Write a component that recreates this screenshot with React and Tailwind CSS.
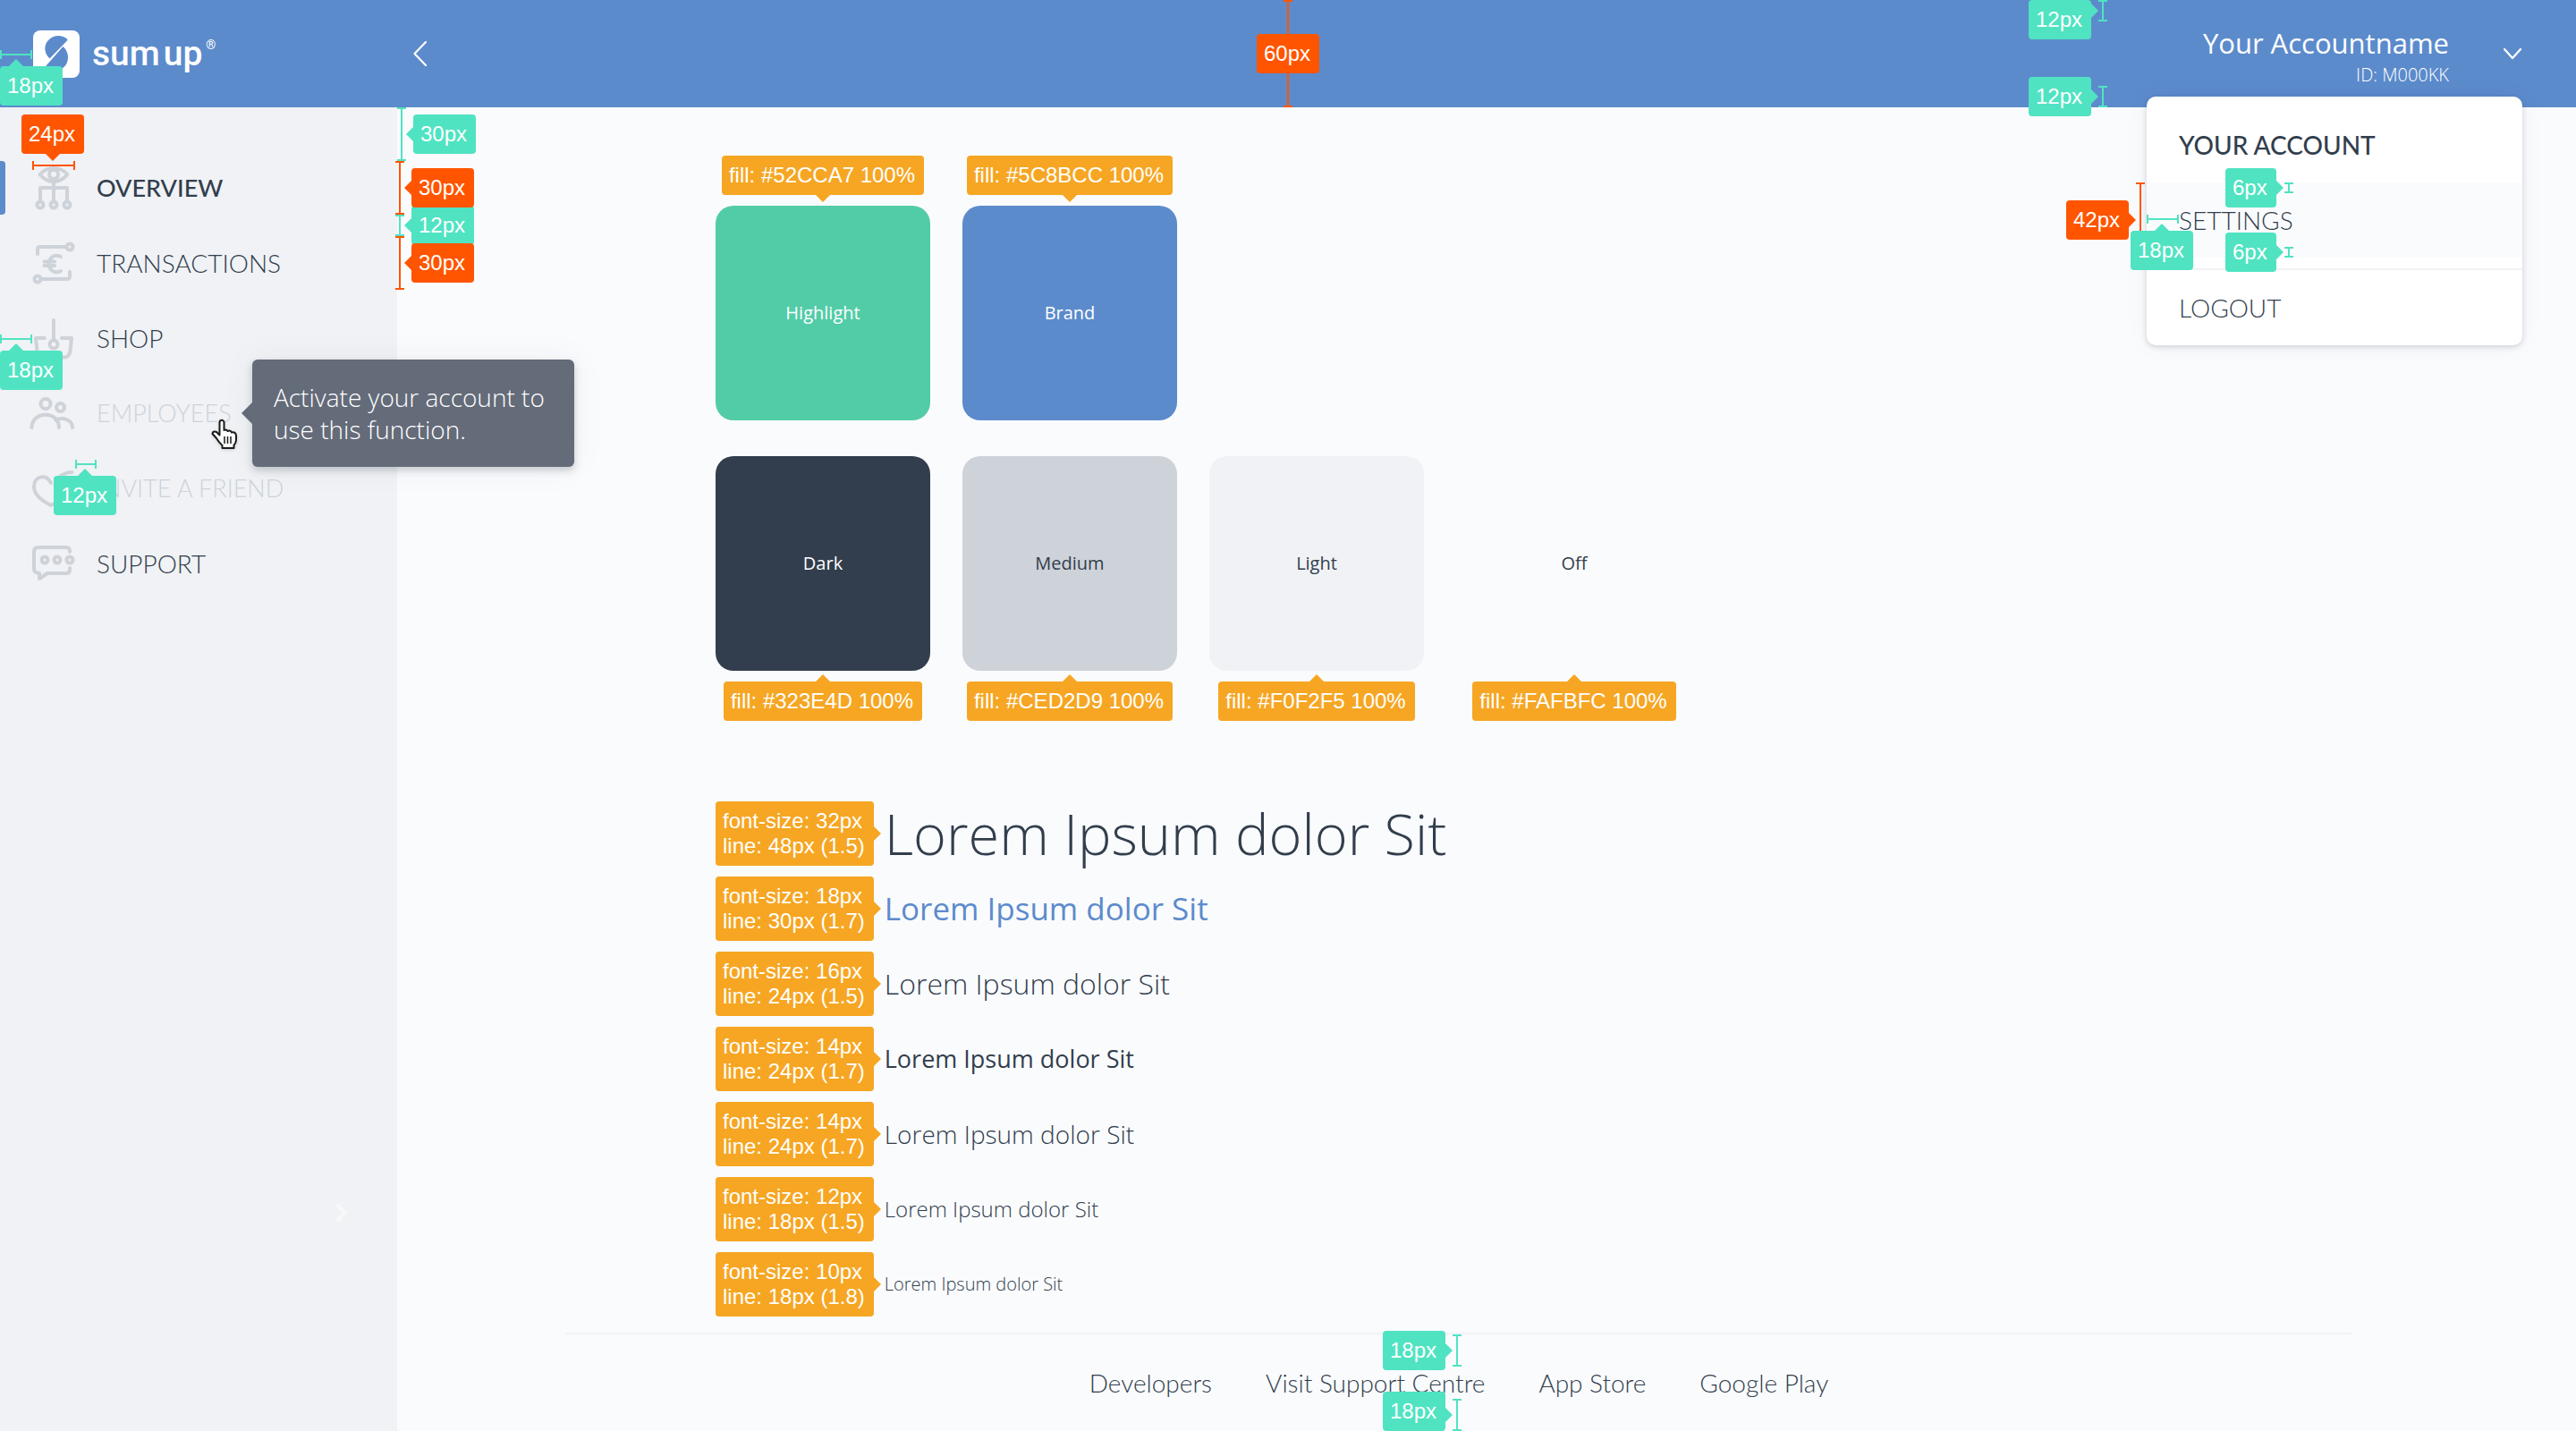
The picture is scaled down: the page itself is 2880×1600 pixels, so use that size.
const BG = {
  teal: "bg-[#50e3c2] text-[#50e3c2]",
  orange: "bg-[#ff5500] text-[#ff5500]",
  amber: "bg-[#f6a623] text-[#f6a623]",
};

const ARROW = {
  up: "bottom-full -translate-x-1/2 border-x-8 border-b-8 border-x-transparent border-b-current",
  down: "top-full -translate-x-1/2 border-x-8 border-t-8 border-x-transparent border-t-current",
  left: "right-full -translate-y-1/2 border-y-8 border-r-8 border-y-transparent border-r-current",
  right: "left-full -translate-y-1/2 border-y-8 border-l-8 border-y-transparent border-l-current",
};

const ARROW_MID = { up: "left-1/2", down: "left-1/2", left: "top-1/2", right: "top-1/2" };

/* Coloured label with a small pointer on one side. */
function Tag({ color, dir, at, className = "relative", children }) {
  return (
    <div className={`${className} ${BG[color]} rounded py-2 pr-2.5 pl-2 font-['Liberation_Sans',sans-serif] text-2xl leading-7 whitespace-nowrap`}>
      <i className={`absolute size-0 ${ARROW[dir]} ${at || ARROW_MID[dir]}`} />
      <span className="block text-white">{children}</span>
    </div>
  );
}

const LINE = { teal: "text-[#50e3c2]", orange: "text-[#ff5500]" };

/* Horizontal and vertical measuring lines with end caps. */
function HRule({ color, className }) {
  return (
    <div className={`absolute flex h-2.5 items-center border-x-2 border-current ${LINE[color]} ${className}`}>
      <i className="h-0.5 w-full bg-current" />
    </div>
  );
}

function VRule({ color, className }) {
  return (
    <div className={`absolute flex w-2.5 justify-center border-y-2 border-current ${LINE[color]} ${className}`}>
      <i className="h-full w-0.5 bg-current" />
    </div>
  );
}

const icons = {
  overview: (
    <>
      <path d="M8.5 15C14 9 19 8 24 8S34 9 39.5 15C34 21.500 29 23 24 23S14 21.500 8.500 15Z" />
      <circle cx="24" cy="15" r="5" />
      <path d="M24 23V44M9 44V30H39V44" />
      <circle cx="9" cy="49" r="3.5" />
      <circle cx="24" cy="49" r="3.5" />
      <circle cx="39" cy="49" r="3.5" />
    </>
  ),
  transactions: (
    <>
      <path d="M6 20V15Q6 12 9 12H37M11 48H39Q42 48 42 45V40" />
      <circle cx="42" cy="12" r="3.5" />
      <circle cx="6" cy="48" r="3.5" />
      <path d="M32 23C28 20.500 22.500 21.500 20 26C18 29 18 33 20 36C22.500 40.500 28 41 32 39" />
      <path d="M13.500 28.500H25M13.500 33H25" />
    </>
  ),
  shop: (
    <>
      <path d="M14 30H4L5.500 44Q6.500 51.500 12 51.500H36Q41.500 51.500 42.500 44L44 30H33" />
      <path d="M24 10V31" />
      <circle cx="24" cy="37" r="4.5" />
    </>
  ),
  employees: (
    <>
      <circle cx="15" cy="19.500" r="5.500" />
      <circle cx="31.500" cy="23.500" r="4.500" />
      <path d="M-.5 46C0 27 30 27 30 46M26 37.500C35 33.500 45 38 45 46" />
    </>
  ),
  invite: (
    <>
      <path d="M21 24C16 13 2 16 2 28C2 37 11 44 21 49C33 43 40 35 38 26" />
      <path d="M30 18C34 14 39 12 44.500 12" />
    </>
  ),
  support: (
    <>
      <path d="M42 17V16Q42 12 38 12H7Q2 12 2 17V36Q2 40.500 8 41V47L17 41H38Q42 41 42 37V35" />
      <circle cx="14" cy="26" r="3.500" />
      <circle cx="28" cy="26" r="3.500" />
      <circle cx="42" cy="26" r="3.500" />
    </>
  ),
};

function Icon({ name }) {
  return (
    <svg viewBox="0 0 48 60" className="h-15 w-12 shrink-0 overflow-visible text-[#ced2d9]" fill="none" stroke="currentColor" strokeWidth="4" strokeLinecap="round" strokeLinejoin="round" aria-hidden="true">
      {icons[name]}
    </svg>
  );
}

const navText = "flex h-15 w-full items-center gap-6 pl-9 text-left font-['Lato',sans-serif] leading-9";

function NavLink({ icon, active, children }) {
  return (
    <a href="#" aria-current={active ? "page" : undefined} className={`${navText} ${active ? "text-[27px] font-medium" : "text-[28px] font-light"} text-[#323e4d]`}>
      {active && <i className="absolute top-0 left-0 h-15 w-1.5 rounded-r bg-[#5c8bcc]" />}
      <Icon name={icon} />
      {children}
    </a>
  );
}

function NavDisabled({ icon, children }) {
  return (
    <button type="button" disabled className={`${navText} text-[27px] font-light text-[#ced2d9]`}>
      <Icon name={icon} />
      {children}
    </button>
  );
}

function Cursor() {
  return (
    <svg viewBox="0 0 32 36" className="absolute top-[35px] left-[235px] h-9 w-8 drop-shadow" aria-hidden="true">
      <path d="M12 3Q14.500 2 15.500 5V14Q18 12.500 19.500 15Q22.500 13.500 24 16.500Q28.500 15.500 29 20V25Q29 28 26.500 31V34H13.500V31Q10 28 7 23L2.500 18Q3 14.500 7 16L10.500 19.500V5Q10.500 3.500 12 3Z" fill="#fff" stroke="#1a1a1a" strokeWidth="2" strokeLinejoin="round" />
      <path d="M16 21V29M19.500 21V29M23 21V29" stroke="#1a1a1a" strokeWidth="1.5" />
    </svg>
  );
}

function Header() {
  return (
    <header className="relative z-20 flex h-30 items-center justify-between bg-[#5c8bcc] pr-15 pl-[37px] text-white">
      <div className="flex items-center">
        <a href="#" className="flex items-center gap-3.5" aria-label="sumup">
          <svg viewBox="0 0 52 53" className="h-[53px] w-[52px]" aria-hidden="true">
            <rect width="52" height="53" rx="8" fill="#fff" />
            <path d="M18 31C12 25 12 16 17 11C22 5 32 4 38 9.500Q39 10.500 38 11.500L19 31Q18.500 31.500 18 31ZM34 18.500C41 25 40 35 35.500 40C30 46.500 20 46.500 14.500 41Q14 40 15 39L33 18.500Q33.500 18 34 18.500Z" fill="#5c8bcc" />
          </svg>
          <span className="flex gap-1 font-['Roboto',sans-serif] text-[39px] leading-[53px] font-medium">
            <span>sum</span>
            <span>up</span>
            <sup className="top-0 text-sm leading-8 font-normal">®</sup>
          </span>
        </a>
      </div>
      <button type="button" aria-label="Collapse menu" className="absolute top-[45px] left-[461px]">
        <svg viewBox="0 0 17 30" className="h-[30px] w-[17px]" fill="none" stroke="currentColor" strokeWidth="2.200" strokeLinecap="round" strokeLinejoin="round">
          <path d="M15 2L2.500 15L15 28" />
        </svg>
      </button>
      <button type="button" className="flex items-center gap-15 text-right">
        <span className="font-['Open_Sans',sans-serif]">
          <span className="block text-[31px] leading-12">Your Accountname</span>
          <span className="block text-xl leading-6 font-light">ID: M000KK</span>
        </span>
        <svg viewBox="0 0 22 14" className="h-3.5 w-[22px]" fill="none" stroke="currentColor" strokeWidth="2.200" strokeLinecap="round" strokeLinejoin="round" aria-hidden="true">
          <path d="M2 2L11 12L20 2" />
        </svg>
      </button>

      <AccountMenu />

      <HRule color="teal" className="top-14 left-0 w-9" />
      <Tag color="teal" dir="up" at="left-[18px]" className="absolute top-[74px] left-0">18px</Tag>
      <VRule color="orange" className="top-0 left-1/2 h-full -translate-x-1/2" />
      <Tag color="orange" dir="up" at="hidden" className="absolute top-[38px] left-1/2 -translate-x-1/2">60px</Tag>
      <Tag color="teal" dir="right" at="top-3" className="absolute top-0 right-[542px]">12px</Tag>
      <VRule color="teal" className="top-0 right-[524px] h-6" />
      <Tag color="teal" dir="right" className="absolute top-[86px] right-[542px]">12px</Tag>
      <VRule color="teal" className="top-24 right-[524px] h-6" />
    </header>
  );
}

function AccountMenu() {
  const item = "flex h-21 items-center px-9 font-['Lato',sans-serif] text-[28px] leading-9";
  return (
    <div className="absolute top-[108px] right-15 w-[420px] rounded-[10px] bg-white pt-3 text-[#323e4d] shadow-[0_2px_6px_rgba(50,62,77,0.2),0_0_30px_rgba(50,62,77,0.04)]">
      <a href="#" className={`${item} font-medium`}>YOUR ACCOUNT</a>
      <a href="#" className={`${item} bg-[#fafbfc] font-light`}>SETTINGS</a>
      <hr className="mt-3 border-t-2 border-[#f0f2f5]" />
      <a href="#" className={`${item} font-light`}>LOGOUT</a>

      <VRule color="orange" className="top-24 right-[422px] h-21" />
      <Tag color="orange" dir="right" className="absolute top-[116px] right-110">42px</Tag>
      <HRule color="teal" className="top-[132px] left-0 w-9" />
      <Tag color="teal" dir="up" className="absolute top-[150px] -left-[18px]">18px</Tag>
      <Tag color="teal" dir="right" className="absolute top-20 left-22">6px</Tag>
      <VRule color="teal" className="top-24 left-[154px] h-3" />
      <Tag color="teal" dir="right" className="absolute top-[152px] left-22">6px</Tag>
      <VRule color="teal" className="top-42 left-[154px] h-3" />
    </div>
  );
}

function Sidebar() {
  return (
    <aside className="relative z-10 w-[444px] shrink-0 bg-[#f0f2f5] pt-15">
      <nav>
        <ul className="flex flex-col gap-6">
          <li className="relative">
            <NavLink icon="overview" active>OVERVIEW</NavLink>
            <Tag color="orange" dir="down" className="absolute -top-[52px] left-6">24px</Tag>
            <HRule color="orange" className="top-0 left-9 w-12" />
          </li>
          <li className="relative"><NavLink icon="transactions">TRANSACTIONS</NavLink></li>
          <li className="relative">
            <NavLink icon="shop">SHOP</NavLink>
            <HRule color="teal" className="top-[26px] left-0 w-9" />
            <Tag color="teal" dir="up" at="left-[18px]" className="absolute top-11 left-0">18px</Tag>
          </li>
          <li className="relative">
            <NavDisabled icon="employees">EMPLOYEES</NavDisabled>
            <div role="tooltip" className="absolute -top-[30px] left-[282px] w-[360px] rounded-md bg-[#646b79] p-6 font-['Open_Sans',sans-serif] text-[28px] leading-9 font-light text-white shadow-[0_4px_8px_rgba(50,62,77,0.25),0_0_40px_rgba(50,62,77,0.05)]">
              <i className="absolute top-1/2 right-full size-0 -translate-y-1/2 border-y-12 border-r-12 border-y-transparent border-r-[#646b79]" />
              Activate your account to use this function.
            </div>
            <Cursor />
          </li>
          <li className="relative">
            <NavDisabled icon="invite">INVITE A FRIEND</NavDisabled>
            <HRule color="teal" className="-top-0.5 left-21 w-6" />
            <Tag color="teal" dir="up" className="absolute top-4 left-15">12px</Tag>
          </li>
          <li className="relative"><NavLink icon="support">SUPPORT</NavLink></li>
        </ul>
      </nav>
      <svg viewBox="0 0 14 22" className="absolute right-[55px] bottom-[233px] h-[22px] w-3.5" fill="none" stroke="#f8f9f9" strokeWidth="4" aria-hidden="true">
        <path d="M2 2L10 11L2 20" />
      </svg>

      <VRule color="teal" className="top-0 left-full h-15" />
      <Tag color="teal" dir="left" className="absolute top-2 left-[462px]">30px</Tag>
      <VRule color="orange" className="top-15 left-[442px] h-15" />
      <VRule color="teal" className="top-30 left-[442px] h-6" />
      <VRule color="orange" className="top-36 left-[442px] h-15" />
      <Tag color="teal" dir="left" className="absolute top-[110px] left-[460px]">12px</Tag>
      <Tag color="orange" dir="left" className="absolute top-17 left-[460px]">30px</Tag>
      <Tag color="orange" dir="left" className="absolute top-38 left-[460px]">30px</Tag>
    </aside>
  );
}

function Swatch({ name, hex, box, below, className = "" }) {
  return (
    <figure className={`flex w-60 items-center gap-3 ${below ? "flex-col-reverse" : "flex-col"} ${className}`}>
      <Tag color="amber" dir={below ? "up" : "down"}>{`fill: ${hex} 100%`}</Tag>
      <figcaption className={`flex h-60 w-full items-center justify-center rounded-[20px] font-['Open_Sans',sans-serif] text-xl leading-6 ${box}`}>{name}</figcaption>
    </figure>
  );
}

const samples = [
  [32, "48px (1.5)", "text-[63px] leading-[72px] font-light text-[#323e4d]"],
  [18, "30px (1.7)", "text-[35px] leading-[60px] font-medium text-[#5c8bcc]"],
  [16, "24px (1.5)", "text-[32px] leading-12 font-light text-[#323e4d]"],
  [14, "24px (1.7)", "text-[27px] leading-12 font-medium text-[#323e4d]"],
  [14, "24px (1.7)", "text-[28px] leading-12 font-light text-[#323e4d]"],
  [12, "18px (1.5)", "text-2xl leading-9 font-light text-[#323e4d]"],
  [10, "18px (1.8)", "text-xl leading-9 font-light text-[#323e4d]"],
];

function Main() {
  return (
    <div className="flex grow flex-col">
      <main className="pt-[54px] pl-[356px]">
        <section className="flex flex-col gap-10">
          <div className="flex gap-9">
            <Swatch name="Highlight" hex="#52CCA7" box="bg-[#52cca7] text-white" />
            <Swatch name="Brand" hex="#5C8BCC" box="bg-[#5c8bcc] text-white" />
          </div>
          <div className="flex gap-9">
            <Swatch below name="Dark" hex="#323E4D" box="bg-[#323e4d] text-white" />
            <Swatch below name="Medium" hex="#CED2D9" box="bg-[#ced2d9] text-[#323e4d]" />
            <Swatch below name="Light" hex="#F0F2F5" box="bg-[#f0f2f5] text-[#323e4d]" />
            <Swatch below name="Off" hex="#FAFBFC" box="bg-[#fafbfc] text-[#323e4d]" className="ml-3" />
          </div>
        </section>
        <section className="mt-[90px] flex flex-col gap-3">
          {samples.map(([size, line, style], i) => (
            <div key={i} className="flex h-18 items-center gap-3">
              <Tag color="amber" dir="right">
                font-size: {size}px
                <br />
                line: {line}
              </Tag>
              <p className={`font-['Open_Sans',sans-serif] ${style}`}>Lorem Ipsum dolor Sit</p>
            </div>
          ))}
        </section>
      </main>
      <footer className="relative mt-auto mr-[250px] ml-[188px] border-t-2 border-[#f0f2f5] py-9">
        <nav className="flex justify-center gap-15 font-['Lato',sans-serif] text-[28px] leading-9 font-light text-[#323e4d]">
          <a href="#">Developers</a>
          <a href="#">Visit Support Centre</a>
          <a href="#">App Store</a>
          <a href="#">Google Play</a>
        </nav>
        <Tag color="teal" dir="right" className="absolute -top-1 right-[1014px]">18px</Tag>
        <VRule color="teal" className="top-0 right-[996px] h-9" />
        <Tag color="teal" dir="right" at="top-[26px]" className="absolute right-[1014px] bottom-0">18px</Tag>
        <VRule color="teal" className="right-[996px] bottom-0 h-9" />
      </footer>
    </div>
  );
}

export default function App() {
  return (
    <div className="flex min-h-screen flex-col bg-[#fafbfd]">
      <Header />
      <div className="flex grow">
        <Sidebar />
        <Main />
      </div>
    </div>
  );
}
